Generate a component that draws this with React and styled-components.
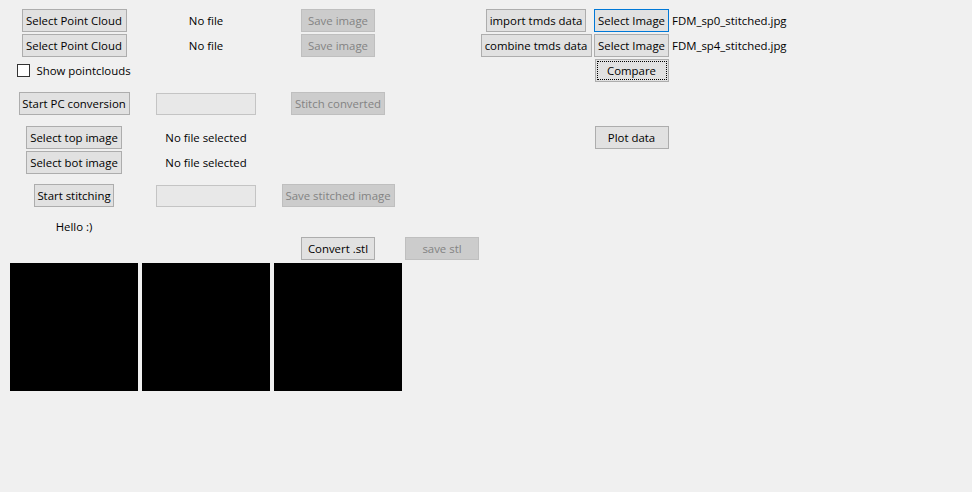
import React from 'react';
import styled, { createGlobalStyle, css } from 'styled-components';

const GlobalStyle = createGlobalStyle`
    html, body {
        margin: 0;
        padding: 0;
        background: #f0f0f0;
    }
    body {
        font-family: "Open Sans", "Noto Sans", "Liberation Sans", sans-serif;
        font-size: 11.4px;
        color: #000;
    }
`

const Window = styled.div`
    box-sizing: border-box;
    width: 972px;
    height: 492px;
    padding: 8px;
    background: #f0f0f0;
    display: grid;
    grid-template-columns: 132px 132px 132px 76px 112px 79px auto;
    grid-template-rows: 25px 25px 25px 41px 27px 23px 43px 20px 23px 131px;
    align-items: center;
    justify-items: center;
`

const Cell = styled.div`
    grid-column: ${p => p.$col + 1};
    grid-row: ${p => p.$row + 1};
    justify-self: ${p => p.$start ? 'start' : 'center'};
    display: flex;
    align-items: center;
`

const Button = styled.button`
    box-sizing: border-box;
    width: ${p => p.$w}px;
    height: 23px;
    padding: 0;
    margin: 0;
    font: inherit;
    line-height: 21px;
    white-space: nowrap;
    color: #000;
    background: #e1e1e1;
    border: 1px solid #adadad;
    border-radius: 0;
    outline: none;
    ${p => p.disabled && css`
        color: #838383;
        background: #cccccc;
        border-color: #bfbfbf;
    `}
    ${p => p.$focus && css`
        border-color: #0078d7;
    `}
    ${p => p.$dotted && css`
        outline: 1px dotted #000;
        outline-offset: -3px;
    `}
`

const Label = styled.span`
    white-space: nowrap;
    line-height: 16px;
    padding-left: ${p => p.$pad || 0}px;
`

const Entry = styled.div`
    box-sizing: border-box;
    width: 100px;
    height: 22px;
    margin-top: 1px;
    background: #e8e8e8;
    border: 1px solid #c4c4c4;
`

const Check = styled.label`
    display: flex;
    align-items: center;
    gap: 6px;
    white-space: nowrap;
    span.box {
        box-sizing: border-box;
        width: 13px;
        height: 13px;
        background: #fff;
        border: 1px solid #333;
    }
`

const Canvas = styled.div`
    width: 128px;
    height: 128px;
    margin-top: 3px;
    background: #000;
`

export default function App() {
    return (
        <>
            <GlobalStyle />
            <Window>
                <Cell $col={0} $row={0}><Button $w={105}>Select Point Cloud</Button></Cell>
                <Cell $col={1} $row={0}><Label>No file</Label></Cell>
                <Cell $col={2} $row={0}><Button $w={74} disabled>Save image</Button></Cell>
                <Cell $col={4} $row={0}><Button $w={100}>import tmds data</Button></Cell>
                <Cell $col={5} $row={0}><Button $w={75} $focus>Select Image</Button></Cell>
                <Cell $col={6} $row={0} $start><Label $pad={1}>FDM_sp0_stitched.jpg</Label></Cell>

                <Cell $col={0} $row={1}><Button $w={105}>Select Point Cloud</Button></Cell>
                <Cell $col={1} $row={1}><Label>No file</Label></Cell>
                <Cell $col={2} $row={1}><Button $w={74} disabled>Save image</Button></Cell>
                <Cell $col={4} $row={1}><Button $w={111}>combine tmds data</Button></Cell>
                <Cell $col={5} $row={1}><Button $w={75}>Select Image</Button></Cell>
                <Cell $col={6} $row={1} $start><Label $pad={1}>FDM_sp4_stitched.jpg</Label></Cell>

                <Cell $col={0} $row={2}>
                    <Check><span className="box" />Show pointclouds</Check>
                </Cell>
                <Cell $col={5} $row={2}><Button $w={74} $dotted>Compare</Button></Cell>

                <Cell $col={0} $row={3}><Button $w={111}>Start PC conversion</Button></Cell>
                <Cell $col={1} $row={3}><Entry /></Cell>
                <Cell $col={2} $row={3}><Button $w={94} disabled>Stitch converted</Button></Cell>

                <Cell $col={0} $row={4}><Button $w={96}>Select top image</Button></Cell>
                <Cell $col={1} $row={4}><Label>No file selected</Label></Cell>
                <Cell $col={5} $row={4}><Button $w={74}>Plot data</Button></Cell>

                <Cell $col={0} $row={5}><Button $w={96}>Select bot image</Button></Cell>
                <Cell $col={1} $row={5}><Label>No file selected</Label></Cell>

                <Cell $col={0} $row={6}><Button $w={80}>Start stitching</Button></Cell>
                <Cell $col={1} $row={6}><Entry /></Cell>
                <Cell $col={2} $row={6}><Button $w={113} disabled>Save stitched image</Button></Cell>

                <Cell $col={0} $row={7}><Label>Hello :)</Label></Cell>

                <Cell $col={2} $row={8}><Button $w={74}>Convert .stl</Button></Cell>
                <Cell $col={3} $row={8}><Button $w={74} disabled>save stl</Button></Cell>

                <Cell $col={0} $row={9}><Canvas /></Cell>
                <Cell $col={1} $row={9}><Canvas /></Cell>
                <Cell $col={2} $row={9}><Canvas /></Cell>
            </Window>
        </>
    );
}
